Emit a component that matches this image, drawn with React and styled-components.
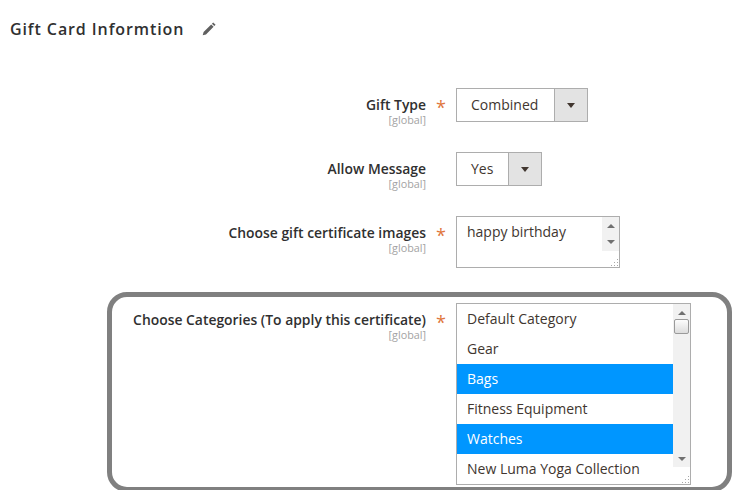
import styled, { createGlobalStyle } from 'styled-components';

const categories = [
    { name: 'Default Category' },
    { name: 'Gear' },
    { name: 'Bags', selected: true },
    { name: 'Fitness Equipment' },
    { name: 'Watches', selected: true },
    { name: 'New Luma Yoga Collection' },
];

function Grip() {
    return (
        <GripIcon width="9" height="9" viewBox="0 0 9 9">
            <path d="M7 1h1v1H7zM7 4h1v1H7zM4 4h1v1H4zM7 7h1v1H7zM4 7h1v1H4zM1 7h1v1H1z" fill="#a8a8a8" />
        </GripIcon>
    );
}

function Field({ label, required, children }) {
    return (
        <Row>
            <LabelCol>
                <Label>{label}</Label>
                <Scope>[global]</Scope>
            </LabelCol>
            <StarCol>{required && '*'}</StarCol>
            <ControlCol>{children}</ControlCol>
        </Row>
    );
}

function App() {
    return (
        <Page>
            <GlobalStyle />
            <Header>
                <Title>Gift Card Informtion</Title>
                <svg width="16" height="16" viewBox="0 0 16 16">
                    <path d="M12.2 1.4l2.4 2.4-1.3 1.3-2.4-2.4zM10.2 3.4l2.4 2.4-7.6 7.6-3.3.9.9-3.3z" fill="#606060" />
                </svg>
            </Header>
            <Fields>
                <Field label="Gift Type" required>
                    <Select>
                        <SelectValue $width={97}>Combined</SelectValue>
                        <SelectArrow />
                    </Select>
                </Field>
                <Field label="Allow Message">
                    <Select>
                        <SelectValue $width={51}>Yes</SelectValue>
                        <SelectArrow />
                    </Select>
                </Field>
                <Field label="Choose gift certificate images" required>
                    <TextArea>
                        <TextValue>happy birthday</TextValue>
                        <MiniScroll>
                            <ArrowUp />
                            <ArrowDown />
                        </MiniScroll>
                        <Grip />
                    </TextArea>
                </Field>
            </Fields>
            <Highlight>
                <Field label="Choose Categories (To apply this certificate)" required>
                    <ListBox>
                        <List>
                            {categories.map((item) => (
                                <Option key={item.name} $selected={item.selected}>{item.name}</Option>
                            ))}
                        </List>
                        <ListScroll>
                            <ArrowUp />
                            <Thumb />
                            <ArrowDown />
                        </ListScroll>
                        <Grip />
                    </ListBox>
                </Field>
            </Highlight>
        </Page>
    );
}

export default App;

const GlobalStyle = createGlobalStyle`
    html, body {
        margin: 0;
        height: 100%;
        overflow: hidden;
        background: #fff;
    }
    * {
        box-sizing: border-box;
    }
`;

const Page = styled.div`
    width: 742px;
    height: 490px;
    overflow: hidden;
    font-family: "Open Sans", "Liberation Sans", sans-serif;
    color: #41362f;
`;

const Header = styled.div`
    display: flex;
    align-items: center;
    gap: 17px;
    height: 58px;
    padding-left: 10px;
`;

const Title = styled.h1`
    margin: 0;
    font-size: 16px;
    font-weight: 600;
    letter-spacing: 0.9px;
    color: #303030;
`;

const Fields = styled.div`
    display: flex;
    flex-direction: column;
    gap: 30px;
    padding: 30px 15px 0 0;
`;

const Row = styled.div`
    display: flex;
    align-items: flex-start;
`;

const LabelCol = styled.div`
    flex: 1;
    display: flex;
    flex-direction: column;
    align-items: flex-end;
    height: 34px;
    padding-top: 7px;
`;

const Label = styled.label`
    font-size: 13.9px;
    font-weight: 600;
    line-height: 20px;
    color: #303030;
`;

const Scope = styled.span`
    font-size: 10.8px;
    line-height: 10px;
    color: #a3a3a3;
`;

const StarCol = styled.div`
    width: 30px;
    padding-top: 9px;
    text-align: center;
    font-size: 18px;
    line-height: 20px;
    color: #e0763c;
`;

const ControlCol = styled.div`
    width: 271px;
    flex-shrink: 0;
`;

const Select = styled.div`
    display: inline-flex;
    height: 34px;
    border: 1px solid #adadad;
    background: #fff;
`;

const SelectValue = styled.div`
    width: ${(p) => p.$width}px;
    padding-left: 14px;
    font-size: 14px;
    line-height: 31px;
    color: #41362f;
`;

const SelectArrow = styled.div`
    width: 33px;
    display: flex;
    align-items: center;
    justify-content: center;
    background: #e3e3e3;
    border-left: 1px solid #adadad;

    &::after {
        content: "";
        border-style: solid;
        border-width: 5px 4px 0;
        border-color: #41362f transparent transparent;
    }
`;

const TextArea = styled.div`
    position: relative;
    display: flex;
    justify-content: space-between;
    align-items: flex-start;
    width: 164px;
    height: 52px;
    border: 1px solid #adadad;
`;

const TextValue = styled.div`
    padding: 5px 0 0 10px;
    font-size: 14px;
    line-height: 20px;
    color: #41362f;
`;

const MiniScroll = styled.div`
    display: flex;
    flex-direction: column;
    align-items: center;
    justify-content: space-between;
    width: 17px;
    height: 34px;
    padding: 7px 0;
    background: #f1f1f1;
`;

const ArrowUp = styled.div`
    flex-shrink: 0;
    border-style: solid;
    border-width: 0 4px 4px;
    border-color: transparent transparent #707070;
`;

const ArrowDown = styled.div`
    flex-shrink: 0;
    border-style: solid;
    border-width: 4px 4px 0;
    border-color: #707070 transparent transparent;
`;

const GripIcon = styled.svg`
    position: absolute;
    right: 0;
    bottom: 0;
`;

const Highlight = styled.section`
    height: 200px;
    margin: 24px 10px 0 107px;
    padding-top: 6px;
    border: 5px solid #808080;
    border-radius: 20px;
    background: #fff;
`;

const ListBox = styled.div`
    position: relative;
    display: flex;
    width: 235px;
    height: 182px;
    border: 1px solid #adadad;
`;

const List = styled.ul`
    flex: 1;
    margin: 0;
    padding: 0;
    list-style: none;
`;

const Option = styled.li`
    height: 30px;
    padding-left: 10px;
    font-size: 14px;
    line-height: 30px;
    color: ${(p) => (p.$selected ? '#fff' : '#41362f')};
    background: ${(p) => (p.$selected ? '#0096ff' : 'transparent')};
`;

const ListScroll = styled.div`
    display: flex;
    flex-direction: column;
    align-items: center;
    width: 17px;
    height: 163px;
    padding: 7px 0 6px;
    background: #f1f1f1;

    ${ArrowDown} {
        margin-top: auto;
    }
`;

const Thumb = styled.div`
    width: 15px;
    height: 15px;
    margin-top: 4px;
    border: 1px solid #9a9a9a;
    border-radius: 2px;
    background: linear-gradient(#fdfdfd, #dcdcdc);
`;
